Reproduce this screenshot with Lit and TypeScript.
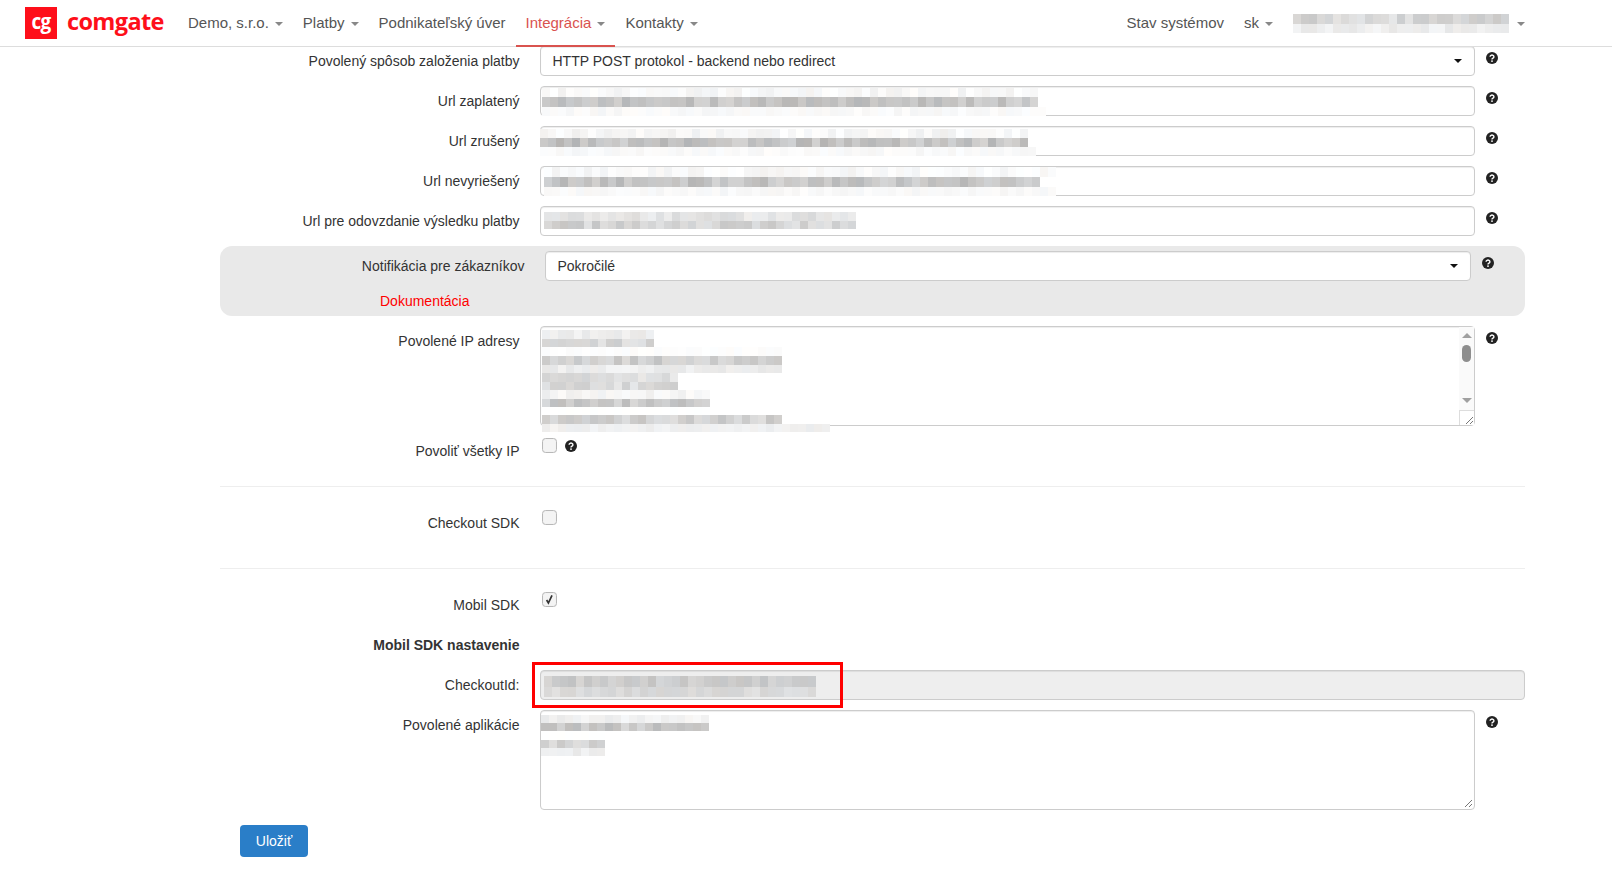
import { LitElement, html, css, svg } from "lit";
import { customElement } from "lit/decorators.js";

type Strip = { y: number; h: number; cols: number; mean: number; spread: number };
type Mosaic = { x: number; y: number; strips: Strip[] };

function rng(seed: number) {
  let s = seed >>> 0;
  return () => {
    s = (s * 1664525 + 1013904223) >>> 0;
    return ((s >>> 8) & 0xffff) / 0xffff;
  };
}

function mosaic(m: Mosaic, seed: number) {
  const r = rng(seed);
  const width = Math.max(...m.strips.map((s) => s.cols)) * 8;
  const last = m.strips[m.strips.length - 1];
  const height = last.y + last.h;
  const rects = m.strips.flatMap((s) =>
    Array.from({ length: s.cols }, (_, i) => {
      const v = Math.min(255, Math.round(s.mean + (r() - 0.5) * s.spread));
      const t = Math.round((r() - 0.5) * 4);
      return svg`<rect x=${i * 8} y=${s.y} width="8" height=${s.h} fill=${`rgb(${Math.min(255, v + t)},${v},${Math.min(255, v - t)})`}></rect>`;
    })
  );
  return html`<svg class="mosaic" style=${`left:${m.x}px;top:${m.y}px`} width=${width} height=${height} shape-rendering="crispEdges">${rects}</svg>`;
}

const help = html`<svg class="help-svg" width="12" height="12" viewBox="0 0 12 12"><circle cx="6" cy="6" r="6" fill="#222"></circle><path d="M4.1 4.7a1.9 1.7 0 1 1 2.9 1.5c-.7.4-1 .7-1 1.2" fill="none" stroke="#fff" stroke-width="1.4"></path><rect x="5.2" y="8.4" width="1.6" height="1.5" fill="#fff"></rect></svg>`;

const grip = html`<svg class="grip" width="9" height="9" viewBox="0 0 9 9"><path d="M1 8 8 1M5 8 8 5" stroke="#777" stroke-width="1" fill="none"></path></svg>`;

const urlRows: { label: string; m: Mosaic }[] = [
  { label: "Url zaplatený", m: { x: 2, y: 2, strips: [
    { y: 0, h: 9, cols: 62, mean: 248, spread: 16 },
    { y: 9, h: 10, cols: 62, mean: 198, spread: 30 },
    { y: 19, h: 9, cols: 63, mean: 249, spread: 8 } ] } },
  { label: "Url zrušený", m: { x: 0, y: 3, strips: [
    { y: 0, h: 9, cols: 61, mean: 247, spread: 18 },
    { y: 9, h: 9, cols: 61, mean: 196, spread: 32 },
    { y: 18, h: 9, cols: 62, mean: 249, spread: 8 } ] } },
  { label: "Url nevyriešený", m: { x: 4, y: 1, strips: [
    { y: 0, h: 10, cols: 64, mean: 249, spread: 14 },
    { y: 10, h: 10, cols: 62, mean: 198, spread: 32 },
    { y: 20, h: 9, cols: 64, mean: 249, spread: 8 } ] } },
  { label: "Url pre odovzdanie výsledku platby", m: { x: 4, y: 6, strips: [
    { y: 0, h: 9, cols: 39, mean: 228, spread: 22 },
    { y: 9, h: 8, cols: 39, mean: 212, spread: 30 } ] } },
];

const ipMosaic: Mosaic = { x: 2, y: 4, strips: [
  { y: 0, h: 9, cols: 14, mean: 238, spread: 14 },
  { y: 9, h: 8, cols: 14, mean: 216, spread: 30 },
  { y: 17, h: 9, cols: 30, mean: 253, spread: 4 },
  { y: 26, h: 9, cols: 30, mean: 206, spread: 30 },
  { y: 35, h: 8, cols: 30, mean: 238, spread: 14 },
  { y: 43, h: 9, cols: 17, mean: 222, spread: 24 },
  { y: 52, h: 8, cols: 17, mean: 218, spread: 28 },
  { y: 60, h: 9, cols: 21, mean: 244, spread: 14 },
  { y: 69, h: 8, cols: 21, mean: 205, spread: 34 },
  { y: 77, h: 8, cols: 21, mean: 255, spread: 0 },
  { y: 85, h: 9, cols: 30, mean: 210, spread: 28 },
  { y: 94, h: 8, cols: 36, mean: 240, spread: 8 },
] };

const ckMosaic: Mosaic = { x: 4, y: 6, strips: [
  { y: 0, h: 11, cols: 34, mean: 204, spread: 22 },
  { y: 11, h: 10, cols: 34, mean: 218, spread: 16 },
] };

const appMosaic: Mosaic = { x: 1, y: 5, strips: [
  { y: 0, h: 8, cols: 21, mean: 241, spread: 14 },
  { y: 8, h: 8, cols: 21, mean: 202, spread: 32 },
  { y: 16, h: 9, cols: 8, mean: 255, spread: 0 },
  { y: 25, h: 8, cols: 8, mean: 212, spread: 26 },
  { y: 33, h: 8, cols: 8, mean: 238, spread: 12 },
] };

const userMosaic: Mosaic = { x: 0, y: 0, strips: [
  { y: 0, h: 10, cols: 27, mean: 216, spread: 30 },
  { y: 10, h: 9, cols: 27, mean: 238, spread: 16 },
] };

@customElement("app-root")
export class AppRoot extends LitElement {
  static styles = css`
    :host { display: block; font-family: "Liberation Sans", Arial, sans-serif; font-size: 14px; line-height: 20px; color: #333; background: #fff; }
    * { box-sizing: border-box; }
    .nav { position: relative; z-index: 2; height: 47px; display: flex; align-items: stretch; justify-content: space-between; background: #fff; border-bottom: 1px solid #ddd; padding: 0 77px 0 25px; font-size: 15px; color: #555; }
    .group { display: flex; align-items: stretch; }
    .logo { display: flex; align-items: center; margin-right: 15px; width: 138px; }
    .logo-mark { width: 32px; height: 32px; background: #fe0f1a; color: #fff; font: 700 22px/27px "Open Sans", sans-serif; letter-spacing: -1px; text-align: center; flex: none; }
    .logo-mark span { display: inline-block; transform: scaleX(.86); }
    .logo-text { margin-left: 10px; color: #fe0f1a; font: 700 23.5px/28px "Open Sans", sans-serif; letter-spacing: -.65px; position: relative; top: -2px; }
    .item { display: flex; align-items: center; padding: 0 10px; height: 46px; white-space: nowrap; }
    .item.active { color: #d9534f; border-bottom: 2px solid #d9534f; height: 47px; padding-top: 1px; }
    .caret { display: inline-block; width: 0; height: 0; border-top: 4px solid #888; border-left: 4px solid transparent; border-right: 4px solid transparent; margin-left: 6px; margin-top: 2px; }
    .user { position: relative; width: 218px; height: 19px; }

    main { margin: -1px 0 0 220px; width: 1305px; position: relative; padding-bottom: 23px; }
    .row { display: grid; grid-template-columns: 320px 935px 50px; margin-bottom: 10px; height: 30px; }
    .label { text-align: right; padding: 5px 20.5px 0 0; white-space: nowrap; }
    .field { position: relative; }
    .box { height: 30px; border: 1px solid #ccc; border-radius: 4px; background: #fff; box-shadow: inset 0 1px 1px rgba(0,0,0,.075); }
    .select { display: flex; align-items: center; justify-content: space-between; padding: 0 12px 0 11.5px; color: #333; }
    .sel-caret { width: 0; height: 0; border-top: 4px solid #111; border-left: 4px solid transparent; border-right: 4px solid transparent; }
    .help { padding: 6px 0 0 11px; line-height: 0; }
    .help-svg { display: block; }
    .mosaic { position: absolute; display: block; }

    .grey { height: 70px; margin-bottom: 10px; background: #e9e9e9; border-radius: 12px; padding-top: 5px; }
    .grey-row { display: grid; grid-template-columns: 325px 926px 50px; height: 30px; }
    .grey-row .label { padding-right: 20.5px; }
    .grey-row .help { padding: 6px 0 0 11px; }
    .doc { margin: 10px 0 0 160px; color: #f00; }

    .ta-row { height: 100px; margin-bottom: 10px; }
    .ta { height: 100px; border: 1px solid #ccc; border-radius: 4px; background: #fff; display: flex; justify-content: flex-end; align-items: flex-end; box-shadow: inset 0 1px 1px rgba(0,0,0,.075); }
    .sb { width: 15px; height: 98px; background: #fafafa; display: flex; flex-direction: column; align-items: center; }
    .sb-up { margin-top: 6px; width: 0; height: 0; border-bottom: 5px solid #a0a0a0; border-left: 5px solid transparent; border-right: 5px solid transparent; }
    .sb-thumb { margin-top: 7px; width: 9px; height: 17px; border-radius: 5px; background: #8e8e8e; }
    .sb-down { margin-top: 36px; width: 0; height: 0; border-top: 5px solid #a0a0a0; border-left: 5px solid transparent; border-right: 5px solid transparent; }
    .sb-corner { margin-top: auto; width: 15px; height: 15px; background: #fff; border-top: 1px solid #ddd; border-left: 1px solid #ddd; display: flex; align-items: flex-end; justify-content: flex-end; }
    .grip { display: block; }
    .corner-only { padding: 0 1px 1px 0; line-height: 0; }

    .check-row { height: 30px; margin-bottom: 20px; }
    .check-row2 { height: 40px; margin-bottom: 20px; }
    .checkbox { display: block; width: 15px; height: 15px; margin: 2px 0 0 2px; border: 1px solid #b8b8b8; border-radius: 3.5px; background: #f4f4f4; box-shadow: inset 0 0 1px rgba(0,0,0,.1); line-height: 0; }
    .field-inline { display: flex; align-items: flex-start; }
    .inline-help { margin: 4px 0 0 8px; }
    hr { border: 0; border-top: 1px solid #eee; margin: 0 0 21px; }
    .bold { font-weight: 700; }
    .wide { grid-column: 2 / 4; }
    .readonly { background: #eee; }
    .mark { position: absolute; left: -8px; top: -8px; width: 311px; height: 46px; border: 3px solid #f00; }
    .ta2-row { height: 100px; margin-bottom: 15px; }
    .save { margin-left: 20px; width: 68px; height: 32px; border: 0; padding: 0; border-radius: 4px; background: #2a7ec8; color: #fff; font: 14px/20px "Liberation Sans", Arial, sans-serif; display: block; }
  `;

  render() {
    const caret = html`<span class="caret"></span>`;
    return html`
      <header class="nav">
        <div class="group">
          <div class="logo"><div class="logo-mark"><span>cg</span></div><div class="logo-text">comgate</div></div>
          <div class="item">Demo, s.r.o.${caret}</div>
          <div class="item">Platby${caret}</div>
          <div class="item">Podnikateľský úver</div>
          <div class="item active">Integrácia${caret}</div>
          <div class="item">Kontakty${caret}</div>
        </div>
        <div class="group">
          <div class="item">Stav systémov</div>
          <div class="item">sk${caret}</div>
          <div class="item"><div class="user">${mosaic(userMosaic, 71)}</div>${caret}</div>
        </div>
      </header>
      <main>
        <div class="row">
          <div class="label">Povolený spôsob založenia platby</div>
          <div class="field"><div class="box select">HTTP POST protokol - backend nebo redirect<span class="sel-caret"></span></div></div>
          <div class="help">${help}</div>
        </div>
        ${urlRows.map((r, i) => html`
          <div class="row">
            <div class="label">${r.label}</div>
            <div class="field"><div class="box"></div>${mosaic(r.m, 11 + i * 37)}</div>
            <div class="help">${help}</div>
          </div>`)}
        <section class="grey">
          <div class="grey-row">
            <div class="label">Notifikácia pre zákazníkov</div>
            <div class="field"><div class="box select">Pokročilé<span class="sel-caret"></span></div></div>
            <div class="help">${help}</div>
          </div>
          <div class="doc">Dokumentácia</div>
        </section>
        <div class="row ta-row">
          <div class="label">Povolené IP adresy</div>
          <div class="field">
            <div class="ta"><div class="sb"><span class="sb-up"></span><span class="sb-thumb"></span><span class="sb-down"></span><div class="sb-corner">${grip}</div></div></div>
            ${mosaic(ipMosaic, 203)}
          </div>
          <div class="help">${help}</div>
        </div>
        <div class="row check-row">
          <div class="label">Povoliť všetky IP</div>
          <div class="field field-inline"><div class="checkbox"></div><div class="inline-help">${help}</div></div>
        </div>
        <hr />
        <div class="row check-row2">
          <div class="label">Checkout SDK</div>
          <div class="field"><div class="checkbox"></div></div>
        </div>
        <hr />
        <div class="row">
          <div class="label">Mobil SDK</div>
          <div class="field"><div class="checkbox"><svg width="13" height="13" viewBox="0 0 13 13"><path d="M3.6 7 5.4 10 9 2.4" fill="none" stroke="#333" stroke-width="1.7"></path></svg></div></div>
        </div>
        <div class="row">
          <div class="label bold">Mobil SDK nastavenie</div>
        </div>
        <div class="row">
          <div class="label">CheckoutId:</div>
          <div class="field wide"><div class="box readonly"></div>${mosaic(ckMosaic, 307)}<div class="mark"></div></div>
        </div>
        <div class="row ta2-row">
          <div class="label">Povolené aplikácie</div>
          <div class="field">
            <div class="ta"><div class="corner-only">${grip}</div></div>
            ${mosaic(appMosaic, 409)}
          </div>
          <div class="help">${help}</div>
        </div>
        <button class="save">Uložiť</button>
      </main>
    `;
  }
}
